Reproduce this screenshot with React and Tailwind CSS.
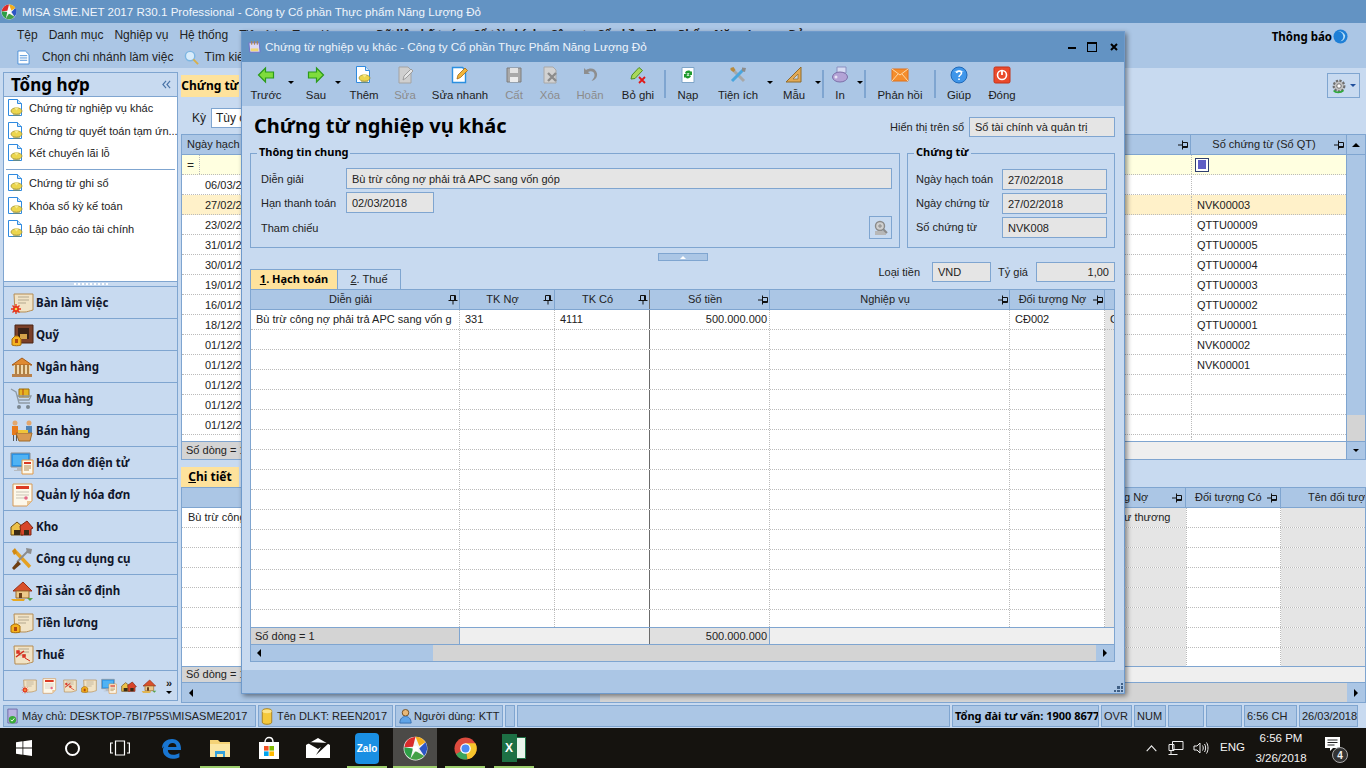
import { Fragment } from 'react'

const FONT = "font-['Liberation_Sans','Noto_Sans',sans-serif]"
const BOLD = "font-['Noto_Sans','Liberation_Sans',sans-serif]"

function Caret({ className = '' }) {
  return <span className={`inline-block w-0 h-0 border-x-[3px] border-x-transparent border-t-[3px] border-t-black ${className}`} />
}

function Pin({ className = '' }) {
  return (
    <svg viewBox="0 0 10 10" className={`w-[10px] h-[10px] shrink-0 ${className}`} fill="none" stroke="#111" strokeWidth="1">
      <path d="M2.5 .5h5v5h-5zM5 5.5v4M.5 5.5h9M6.5 .5v5" />
    </svg>
  )
}

function PinSide({ className = '' }) {
  return (
    <svg viewBox="0 0 10 10" className={`w-[10px] h-[10px] shrink-0 ${className}`} fill="none" stroke="#111" strokeWidth="1">
      <path d="M4.5 2.5h5v5h-5zM4.5 .5v9M0 5h4.5M4.5 6.5h5" />
    </svg>
  )
}

function MisaLogo({ size = 16 }) {
  return (
    <svg viewBox="0 0 20 20" width={size} height={size} className="shrink-0">
      <circle cx="10" cy="10" r="9.5" fill="#f4f4f4" />
      <path d="M10 .5a9.5 9.5 0 0 1 8 4.5l-5 3z" fill="#f2ae1c" />
      <path d="M18 5a9.5 9.5 0 0 1-1 11l-4-6z" fill="#2c55c4" />
      <path d="M17 16a9.5 9.5 0 0 1-11 2l4-6z" fill="#43a047" />
      <path d="M6 18a9.5 9.5 0 0 1-5-9l7 1z" fill="#2e9e46" />
      <path d="M1 9a9.5 9.5 0 0 1 9-8.5l-2 8z" fill="#d92b2b" />
      <circle cx="10" cy="10" r="2.3" fill="#fff" />
    </svg>
  )
}

function DocSun() {
  return (
    <svg viewBox="0 0 18 18" width="18" height="18" className="shrink-0">
      <path d="M1.5 .5h9l4 4v12h-13z" fill="#fff" stroke="#2f8ae0" />
      <path d="M10.5 .5v4h4" fill="#cfe3f7" stroke="#2f8ae0" />
      <ellipse cx="9.5" cy="12" rx="5.5" ry="3.2" fill="#ecd64e" stroke="#97862a" strokeWidth=".7" />
      <path d="M7 8.5l2.500 3 2.500-3" fill="#f5e88a" />
      <path d="M6 16h7" stroke="#8f8a3a" />
    </svg>
  )
}

function ArrowIcon({ left }) {
  return (
    <svg viewBox="0 0 18 18" width="18" height="18">
      <path d={left ? 'M1.5 9l7-7v4h8v6h-8v4z' : 'M16.5 9l-7-7v4h-8v6h8v4z'} fill="#7fdc3c" stroke="#2b9a1a" strokeWidth="1.2" />
    </svg>
  )
}

function GreyEdit() {
  return (
    <svg viewBox="0 0 18 18" width="18" height="18">
      <path d="M3 1h9l3 3v13H3z" fill="#cfcfcf" stroke="#a3a3a3" />
      <path d="M7 14l1-4 7-7 2 2-7 7z" fill="#e6e6e6" stroke="#9c9c9c" />
    </svg>
  )
}

function EditIcon() {
  return (
    <svg viewBox="0 0 18 18" width="18" height="18">
      <path d="M1.5 1.5h10l3 3v12h-13z" fill="#fff" stroke="#2b8fe0" strokeWidth="1.4" />
      <path d="M6 13l1-4 7-7 2.5 2.5-7 7z" fill="#f3b63a" stroke="#a36a10" strokeWidth=".8" />
    </svg>
  )
}

function FloppyIcon() {
  return (
    <svg viewBox="0 0 18 18" width="18" height="18">
      <path d="M2 2h14v14H2z" fill="#a9a9a9" stroke="#7e7e7e" />
      <path d="M5 2h8v5H5z" fill="#e2e2e2" />
      <path d="M5 11h8v5H5z" fill="#ececec" />
    </svg>
  )
}

function DeleteIcon() {
  return (
    <svg viewBox="0 0 18 18" width="18" height="18">
      <path d="M3 1h9l3 3v13H3z" fill="#d2d2d2" stroke="#a8a8a8" />
      <path d="M7 7l8 8M15 7l-8 8" stroke="#8b8b8b" strokeWidth="2.4" />
    </svg>
  )
}

function UndoIcon() {
  return (
    <svg viewBox="0 0 18 18" width="18" height="18">
      <path d="M3 2v6h6L7 6c3-1.5 6-.5 6.500 2.500.3 2.500-1 4-3 6.500 4-1 6-4 5.500-7.500C15 2.500 9.500 1 5 4z" fill="#8e8e8e" />
    </svg>
  )
}

function CancelIcon() {
  return (
    <svg viewBox="0 0 18 18" width="18" height="18">
      <path d="M2 13l1-4 7-7.5 3.500 3L6 12.500z" fill="#a9d85a" stroke="#4f8f20" />
      <path d="M10 11l6 6M16 11l-6 6" stroke="#e01818" strokeWidth="1.8" />
    </svg>
  )
}

function ReloadIcon() {
  return (
    <svg viewBox="0 0 18 18" width="18" height="18">
      <path d="M3 1.5h12v15H3z" fill="#fff" stroke="#7fa5c8" />
      <path d="M6 7c1-3 5-3 6-1l1-1v4H9l1.500-1.500C10 7 8 7 7.500 8zM12 10c-1 3-5 3-6 1l-1 1V8h4l-1.500 1.500c.5.5 2.500.5 3-.5z" fill="#1f9a2e" />
    </svg>
  )
}

function ToolsIcon() {
  return (
    <svg viewBox="0 0 18 18" width="18" height="18" fill="none">
      <path d="M3 3l12 12" stroke="#a8a8a8" strokeWidth="3" />
      <path d="M15 3L3 15" stroke="#4aa6de" strokeWidth="3" />
      <path d="M1.5 2l3-1 2 3-2 2-3-2z" fill="#b88a3c" />
      <path d="M13 1.5l4 .5-1 4-3-1z" fill="#8c8c8c" />
    </svg>
  )
}

function RulerIcon() {
  return (
    <svg viewBox="0 0 18 18" width="18" height="18">
      <path d="M16 1v15H1z" fill="#e2a954" stroke="#8e6a2c" />
      <path d="M13 8v5H8z" fill="#c9d8ea" stroke="#8e6a2c" strokeWidth=".7" />
    </svg>
  )
}

function PrintIcon() {
  return (
    <svg viewBox="0 0 18 18" width="18" height="18">
      <path d="M6 1h9v6H6z" fill="#d7dcf3" stroke="#8a8fc0" />
      <ellipse cx="9" cy="11" rx="7.5" ry="5" fill="#b3a3d6" stroke="#7d6fa8" />
      <circle cx="5" cy="11" r="1.5" fill="#e9e4f6" />
    </svg>
  )
}

function MailIcon() {
  return (
    <svg viewBox="0 0 18 18" width="18" height="18">
      <path d="M1 3h16v12H1z" fill="#f58e2c" stroke="#e0701a" />
      <path d="M1 3l8 6 8-6M1 15l6-7M17 15l-6-7" fill="none" stroke="#ffd9a8" />
    </svg>
  )
}

function HelpIcon() {
  return (
    <svg viewBox="0 0 18 18" width="18" height="18">
      <circle cx="9" cy="9" r="8" fill="#3f96ea" stroke="#1f69b8" />
      <path d="M4 6a6 4 0 0 1 10 0z" fill="#a8d4fa" />
      <path d="M6.5 7C7 4.500 11.500 4.500 11.500 7c0 2-2.500 2-2.500 4" fill="none" stroke="#fff" strokeWidth="1.6" />
      <path d="M8.2 12.5h1.600v1.600H8.200z" fill="#fff" />
    </svg>
  )
}

function PowerIcon() {
  return (
    <svg viewBox="0 0 18 18" width="18" height="18">
      <rect x="1" y="1" width="16" height="16" rx="1.5" fill="#ea4a2c" stroke="#c43218" />
      <circle cx="9" cy="9" r="4.5" fill="none" stroke="#fff" strokeWidth="1.6" />
      <path d="M9 5v4" stroke="#fff" strokeWidth="1.8" />
    </svg>
  )
}

function Paper({ children }) {
  return (
    <svg viewBox="0 0 24 24" width="24" height="24" className="shrink-0">
      <path d="M4 3h19v16c-4 1-6 2-8 2H5z" fill="#f1e3c6" stroke="#b58c52" />
      <path d="M8 6h11M8 9h11M8 12h8" stroke="#b3a78e" />
      {children}
    </svg>
  )
}

const navIcons = {
  desk: (
    <Paper>
      <circle cx="6" cy="18" r="3" fill="#e8341c" />
      <path d="M6 13v10M1 18h10M2.5 14.5l7 7M9.5 14.5l-7 7" stroke="#e8341c" strokeWidth="1.3" />
      <circle cx="6" cy="18" r="1.3" fill="#f5d94c" />
    </Paper>
  ),
  safe: (
    <svg viewBox="0 0 24 24" width="24" height="24">
      <path d="M5 2h18v18H5z" fill="#7a3f28" stroke="#4a2414" />
      <path d="M8 5h11v11H8z" fill="#3b2217" />
      <path d="M10 11h7v5h-7z" fill="#d5a24a" />
      <path d="M2 16l3-3h3l3 3v6c-3 1-6 1-9 0z" fill="#f5b21e" stroke="#a86d08" />
      <path d="M5 16h3v4H5z" fill="#b04a10" />
    </svg>
  ),
  bank: (
    <svg viewBox="0 0 24 24" width="24" height="24">
      <path d="M12 3L2 10h20z" fill="#e08a32" stroke="#a65c18" />
      <path d="M4 10h16v9H4z" fill="#f2d9ad" />
      <path d="M6 10v9M10 10v9M14 10v9M18 10v9" stroke="#9b6a2c" strokeWidth="1.6" />
      <path d="M2 19h20v3H2z" fill="#b9814a" />
    </svg>
  ),
  cart: (
    <svg viewBox="0 0 24 24" width="24" height="24" fill="none">
      <path d="M9 2h10v8H9z" fill="#e6b422" stroke="#9b6e0c" />
      <path d="M13 2v8" stroke="#b5400e" />
      <path d="M1 2l5 3 3 11h11M7 9h14l-2 4H8" stroke="#8e9aa4" strokeWidth="1.3" />
      <circle cx="9" cy="20" r="2" fill="#7b8791" />
      <circle cx="18" cy="20" r="2" fill="#7b8791" />
    </svg>
  ),
  sale: (
    <svg viewBox="0 0 24 24" width="24" height="24">
      <circle cx="5" cy="4" r="2.5" fill="#e3a86e" />
      <path d="M2 7h6v9H2z" fill="#e87b1c" />
      <path d="M3 16h1v6H3zM6 16h1v6H6z" fill="#555" />
      <circle cx="19" cy="4" r="2.5" fill="#e3a86e" />
      <path d="M16 7h6v7h-6z" fill="#4f84b8" />
      <path d="M6 14h16l-2 8H9z" fill="#d99a52" stroke="#a06a28" />
      <path d="M8 11h10v3H8z" fill="#f0c43a" />
    </svg>
  ),
  einvoice: (
    <svg viewBox="0 0 24 24" width="24" height="24">
      <path d="M1 2h19v14H1z" fill="#2a94e8" stroke="#8b8f94" />
      <path d="M3 4h15v10H3z" fill="#4fb3f4" />
      <path d="M7 16h6v3H7zM4 19h11v1H4z" fill="#b5bac0" />
      <path d="M12 9h11v14H12z" fill="#fdf8ea" stroke="#e09a48" />
      <path d="M14 11h7v2h-7z" fill="#d83a24" />
      <path d="M14 15h7M14 17h7M14 19h5" stroke="#b58c52" />
    </svg>
  ),
  invoice: (
    <svg viewBox="0 0 24 24" width="24" height="24">
      <path d="M3 1h19v17l-5 5H3z" fill="#fdf8ea" stroke="#d69a58" />
      <path d="M6 3h13v3H6z" fill="#dc3a24" />
      <path d="M6 9h13M6 12h13M6 15h9" stroke="#c9c3b5" />
      <path d="M17 23v-5h5z" fill="#e8c595" />
      <circle cx="16" cy="15" r="1.8" fill="#e56a8a" />
    </svg>
  ),
  store: (
    <svg viewBox="0 0 24 24" width="24" height="24">
      <path d="M1 12l6-5 6 5v8H1z" fill="#ecc14a" stroke="#6f4c10" />
      <path d="M10 11l7-5 6 7-2 1v6H11z" fill="#d8452a" stroke="#7e2410" />
      <path d="M4 15h6v5H4zM14 15h5v5h-5z" fill="#3a2a15" />
    </svg>
  ),
  tool: (
    <svg viewBox="0 0 24 24" width="24" height="24" fill="none">
      <path d="M4 3l16 17" stroke="#e5a122" strokeWidth="3.4" />
      <path d="M2 4l3-3 2 5-3 2z" fill="#d28a14" />
      <path d="M19 3L7 15" stroke="#8d8d8d" strokeWidth="2" />
      <path d="M8 14l-6 7 2 2 7-6z" fill="#6f3f12" />
      <path d="M16 1l6 1-1 5-4-1z" fill="#8d8d8d" />
    </svg>
  ),
  asset: (
    <svg viewBox="0 0 24 24" width="24" height="24">
      <path d="M3 12L13 3l9 9z" fill="#d9502a" stroke="#97301a" />
      <path d="M6 12h13v7H6z" fill="#ecc98a" stroke="#9b6a2c" />
      <path d="M9 14h3v5H9z" fill="#6b3f18" />
      <path d="M1 20h14l-1 2H3z" fill="#e8a820" />
      <path d="M17 19h6l-3 3z" fill="#55a24a" />
    </svg>
  ),
  salary: (
    <Paper>
      <path d="M1 15l3-2h3l3 2v6c-3 1-6 1-9 0z" fill="#f5b21e" stroke="#a86d08" />
      <path d="M4 16h3v4H4z" fill="#b04a10" />
    </Paper>
  ),
  tax: (
    <Paper>
      <path d="M6 14l8-6M7 8h2v2H7zM13 12h2v2h-2z" stroke="#d8281a" strokeWidth="1.4" fill="none" />
      <path d="M15 15l5 3" stroke="#d8281a" />
    </Paper>
  ),
}

const navItems = [
  ['Bàn làm việc', 'desk'],
  ['Quỹ', 'safe'],
  ['Ngân hàng', 'bank'],
  ['Mua hàng', 'cart'],
  ['Bán hàng', 'sale'],
  ['Hóa đơn điện tử', 'einvoice'],
  ['Quản lý hóa đơn', 'invoice'],
  ['Kho', 'store'],
  ['Công cụ dụng cụ', 'tool'],
  ['Tài sản cố định', 'asset'],
  ['Tiền lương', 'salary'],
  ['Thuế', 'tax'],
]

function Sidebar() {
  return (
    <aside className="w-[175px] ml-[3px] mt-[4px] mb-[3px] shrink-0 flex flex-col border border-[#7fa5d0] bg-[#c8daf0]">
      <div className="h-[24px] shrink-0 flex items-center justify-between pl-[7px] pr-[6px] border-b border-[#7fa5d0]">
        <span className={`text-[17px] font-bold text-black ${BOLD}`}>Tổng hợp</span>
        <svg viewBox="0 0 10 10" className="w-[9px] h-[9px]" fill="none" stroke="#4a74a8" strokeWidth="1.3">
          <path d="M4.5 1L1 5l3.500 4M9 1L5.500 5 9 9" />
        </svg>
      </div>
      <div className="h-[185px] shrink-0 bg-white text-[11px] text-[#222] border-b border-[#7fa5d0]">
        {['Chứng từ nghiệp vụ khác', 'Chứng từ quyết toán tạm ứn...', 'Kết chuyển lãi lỗ'].map(t => (
          <div key={t} className="h-[22.5px] flex items-center gap-[4px] pl-[3px] whitespace-nowrap"><DocSun />{t}</div>
        ))}
        <div className="h-[1px] bg-[#7fa5d0] mx-[2px] mt-[4px] mb-[2px]" />
        {['Chứng từ ghi sổ', 'Khóa sổ kỳ kế toán', 'Lập báo cáo tài chính'].map(t => (
          <div key={t} className="h-[23px] flex items-center gap-[4px] pl-[3px] whitespace-nowrap"><DocSun />{t}</div>
        ))}
      </div>
      <div className="h-[5px] shrink-0 flex items-center justify-center border-b border-[#7fa5d0]">
        <span className="w-[34px] h-[2px] border-t-2 border-dotted border-white" />
      </div>
      {navItems.map(([label, icon]) => (
        <div key={label} className="h-[32px] shrink-0 flex items-center gap-[2px] pl-[5px] border-b border-[#7fa5d0]">
          <span className="w-[25px] flex justify-center">{navIcons[icon]}</span>
          <span className={`text-[11.5px] font-bold text-[#10162a] whitespace-nowrap ${BOLD}`}>{label}</span>
        </div>
      ))}
      <div className="flex-1 flex items-center pl-[17px] gap-[4px]">
        {['desk', 'invoice', 'tax', 'salary', 'einvoice', 'store', 'asset'].map(k => (
          <span key={k} className="w-[16px] h-[16px] overflow-hidden [&>svg]:w-[16px] [&>svg]:h-[16px]">{navIcons[k]}</span>
        ))}
        <span className="ml-[5px] flex flex-col items-center leading-none text-[11px] font-bold">
          »<Caret className="mt-[2px]" />
        </span>
      </div>
    </aside>
  )
}

const topRows = ['06/03/2018', '27/02/2018', '23/02/2018', '31/01/2018', '30/01/2018', '19/01/2018', '16/01/2018', '18/12/2017', '01/12/2017', '01/12/2017', '01/12/2017', '01/12/2017', '01/12/2017', '01/12/2017']
const topCodes = ['', 'NVK00003', 'QTTU00009', 'QTTU00005', 'QTTU00004', 'QTTU00003', 'QTTU00002', 'QTTU00001', 'NVK00002', 'NVK00001', '', '', '', '']

function ListGrid() {
  return (
    <div className="h-[326px] shrink-0 flex flex-col border border-[#7fa5d0] text-[11px] text-[#222]">
      <div className="h-[20px] shrink-0 flex bg-[#abc6e5] border-b border-[#7fa5d0]">
        <div className="flex-1 flex items-center pl-[5px] whitespace-nowrap">Ngày hạch toán</div>
        <div className="w-[67px] shrink-0 flex items-center justify-end pr-[2px] border-r border-[#7fa5d0]"><PinSide /></div>
        <div className="w-[155px] shrink-0 flex items-center justify-center relative pr-[9px]">
          Số chứng từ (Sổ QT)
          <PinSide className="absolute right-[2px]" />
        </div>
        <div className="w-[19px] shrink-0 border-l border-[#7fa5d0] flex items-center justify-center">
          <span className="w-0 h-0 border-x-[4px] border-x-transparent border-b-[4px] border-b-black" />
        </div>
      </div>
      <div className="flex-1 flex min-h-0">
        <div className="flex-1 min-w-0 flex flex-col overflow-hidden">
          <div className="h-[20px] shrink-0 flex bg-[#ffffe0] border-b border-dotted border-[#bbb]">
            <div className="w-[18px] shrink-0 flex items-center justify-center border-r border-dotted border-[#bbb] text-[12px]">=</div>
            <div className="flex-1" />
            <div className="w-[155px] shrink-0 border-l border-dotted border-[#bbb] flex items-center pl-[3px]">
              <span className="w-[14px] h-[14px] border border-[#2f3f6e] flex items-center justify-center bg-white">
                <span className="w-[8px] h-[9px] bg-[#5e5ec4]" />
              </span>
            </div>
          </div>
          {topRows.map((d, i) => (
            <div key={i} className={`h-[20px] shrink-0 flex pt-[1px] border-b border-dotted border-[#bbb] ${i === 1 ? 'bg-[#fff1c9]' : 'bg-white'}`}>
              <div className="flex-1 flex items-center pl-[23px]">{d}</div>
              <div className="w-[155px] shrink-0 border-l border-dotted border-[#bbb] flex items-center pl-[5px]">{topCodes[i]}</div>
            </div>
          ))}
        </div>
        <div className="w-[19px] shrink-0 flex flex-col border-l border-[#7fa5d0] bg-[#d4d4d4]">
          <div className="h-[260px] bg-[#abc6e5]" />
        </div>
      </div>
      <div className="h-[18px] shrink-0 flex bg-[#efefef] border-t border-[#7fa5d0]">
        <div className="w-[60px] flex items-center pl-[4px] bg-[#d4d4d4] whitespace-nowrap overflow-hidden">Số dòng = 14</div>
        <div className="flex-1" />
        <div className="w-[19px] shrink-0 bg-[#abc6e5] border-l border-[#7fa5d0] flex items-center justify-center"><Caret /></div>
      </div>
    </div>
  )
}

function DetailGrid() {
  return (
    <div className="flex-1 min-h-0 flex flex-col">
      <div className="h-[20px] shrink-0 flex">
        <div className={`w-[58px] h-full bg-[#fee29c] flex items-center justify-center text-[12px] font-bold text-black ${BOLD}`}><span><u>C</u>hi tiết</span></div>
      </div>
      <div className="flex-1 min-h-0 flex flex-col border border-[#7fa5d0] text-[11px] text-[#222]">
        <div className="h-[20px] shrink-0 flex bg-[#abc6e5] border-b border-[#7fa5d0]">
          <div className="flex-1" />
          <div className="w-[62px] shrink-0 flex items-center justify-between whitespace-nowrap border-r border-[#7fa5d0] pr-[3px]"><span>g Nợ</span><PinSide /></div>
          <div className="w-[95px] shrink-0 flex items-center justify-between whitespace-nowrap border-r border-[#7fa5d0] px-[9px] pr-[3px]"><span>Đối tượng Có</span><PinSide /></div>
          <div className="w-[84px] shrink-0 flex items-center whitespace-nowrap overflow-hidden pl-[27px]">Tên đối tượng</div>
        </div>
        <div className="flex-1 min-h-0 overflow-hidden">
          {Array.from({ length: 8 }).map((_, i) => (
            <div key={i} className="h-[20px] flex border-b border-dotted border-[#bbb] bg-white">
              <div className="flex-1 flex items-center pl-[6px] whitespace-nowrap">{i === 0 ? 'Bù trừ công nợ' : ''}</div>
              <div className="w-[62px] shrink-0 bg-[#e5e5e5] flex items-center whitespace-nowrap">{i === 0 ? 'ư thương' : ''}</div>
              <div className="w-[95px] shrink-0 border-x border-dotted border-[#bbb]" />
              <div className="w-[84px] shrink-0 bg-[#e5e5e5]" />
            </div>
          ))}
        </div>
        <div className="h-[17px] shrink-0 flex bg-[#efefef] border-y border-[#7fa5d0]">
          <div className="w-[60px] bg-[#d4d4d4] flex items-center pl-[4px] whitespace-nowrap overflow-hidden">Số dòng = 1</div>
        </div>
        <div className="h-[19px] shrink-0 flex bg-[#d4d4d4]">
          <div className="w-[18px] bg-[#abc6e5] flex items-center justify-center"><span className="w-0 h-0 border-y-[4px] border-y-transparent border-r-[4px] border-r-black" /></div>
          <div className="w-[400px] bg-[#abc6e5]" />
          <div className="flex-1" />
          <div className="w-[18px] bg-[#abc6e5] flex items-center justify-center"><span className="w-0 h-0 border-y-[4px] border-y-transparent border-l-[4px] border-l-black" /></div>
        </div>
      </div>
    </div>
  )
}

function MainPane() {
  return (
    <main className="flex-1 min-w-0 ml-[3px] flex flex-col mb-[1px]">
      <div className="h-[26px] mt-[7px] shrink-0 flex items-start justify-between">
        <div className={`w-[58px] h-[22px] bg-[#fee29c] flex items-center justify-center text-[12px] font-bold whitespace-nowrap overflow-hidden text-black ${BOLD}`}>Chứng từ</div>
        <div className="w-[33px] h-[25px] mr-[6px] mt-[-2px] border border-[#7fa5d0] flex items-center justify-center gap-[3px]">
          <svg viewBox="0 0 18 18" width="16" height="16">
            <circle cx="9" cy="9" r="6" fill="#c3c3c3" stroke="#6e6e6e" strokeWidth="2.4" strokeDasharray="2.5 1.5" />
            <circle cx="9" cy="9" r="2.5" fill="#fff" stroke="#666" />
            <path d="M3 14c2 3 8 3 11 0" fill="none" stroke="#31a83c" strokeWidth="2" />
          </svg>
          <span className="w-0 h-0 border-x-[3px] border-x-transparent border-t-[3px] border-t-[#1f4f9c]" />
        </div>
      </div>
      <div className="h-[33px] shrink-0 flex items-center gap-[5px] pl-[11px] text-[12px]">
        <span>Kỳ</span>
        <span className="h-[20px] w-[60px] bg-white border border-[#7fa5d0] pl-[4px] flex items-center whitespace-nowrap">Tùy chọn</span>
      </div>
      <ListGrid />
      <div className="h-[7px] shrink-0" />
      <DetailGrid />
    </main>
  )
}

const toolItems = [
  { label: 'Trước', icon: <ArrowIcon left />, w: 'w-[36px]', caret: 'w-[14px]' },
  { label: 'Sau', icon: <ArrowIcon />, w: 'w-[36px]', caret: 'w-[8px]' },
  { label: 'Thêm', icon: <DocSun />, w: 'w-[44px]' },
  { label: 'Sửa', icon: <GreyEdit />, w: 'w-[38px]', off: true },
  { label: 'Sửa nhanh', icon: <EditIcon />, w: 'w-[72px]' },
  { label: 'Cất', icon: <FloppyIcon />, w: 'w-[36px]', off: true },
  { label: 'Xóa', icon: <DeleteIcon />, w: 'w-[36px]', off: true },
  { label: 'Hoãn', icon: <UndoIcon />, w: 'w-[44px]', off: true },
  { label: 'Bỏ ghi', icon: <CancelIcon />, w: 'w-[52px]', sep: true },
  { label: 'Nạp', icon: <ReloadIcon />, w: 'w-[44px]' },
  { label: 'Tiện ích', icon: <ToolsIcon />, w: 'w-[56px]', caret: 'w-[8px]' },
  { label: 'Mẫu', icon: <RulerIcon />, w: 'w-[40px]', caret: 'w-[8px]', sep: true },
  { label: 'In', icon: <PrintIcon />, w: 'w-[32px]', caret: 'w-[8px]', sep: true },
  { label: 'Phản hồi', icon: <MailIcon />, w: 'w-[68px]', sep: true },
  { label: 'Giúp', icon: <HelpIcon />, w: 'w-[46px]' },
  { label: 'Đóng', icon: <PowerIcon />, w: 'w-[40px]' },
]

function Field({ className = '', children, right }) {
  return (
    <div className={`bg-[#e5e5e5] border border-[#7fa5d0] flex items-center px-[5px] pt-[1px] whitespace-nowrap overflow-hidden ${right ? 'justify-end' : ''} ${className}`}>
      {children}
    </div>
  )
}

function Group({ title, className = '', children }) {
  return (
    <div className={`relative border border-[#7fa5d0] ${className}`}>
      <span className={`absolute -top-[10px] left-[6px] bg-[#c8daf0] px-[2px] text-[11px] font-bold text-black whitespace-nowrap ${BOLD}`}>{title}</span>
      {children}
    </div>
  )
}

const gridCols = [
  { w: 'w-[209px]', title: 'Diễn giải', pin: <Pin /> },
  { w: 'w-[95px]', title: 'TK Nợ', pin: <Pin /> },
  { w: 'w-[95px]', title: 'TK Có', pin: <Pin />, thick: true },
  { w: 'w-[120px]', title: 'Số tiền', pin: <PinSide /> },
  { w: 'w-[240px]', title: 'Nghiệp vụ', pin: <PinSide /> },
  { w: 'w-[95px]', title: 'Đối tượng Nợ', pin: <PinSide /> },
]

const firstRow = ['Bù trừ công nợ phải trả APC sang vốn g', '331', '4111', '500.000.000', '', 'CĐ002']

function Dialog() {
  return (
    <section className="absolute left-[241px] top-[31px] w-[884px] h-[663px] flex flex-col border border-[#6f9acb] bg-[#c8daf0] shadow-[2px_2px_5px_rgba(0,0,0,.45)] text-[11px] text-[#222]">
      <header className="h-[30px] shrink-0 bg-[#6393c3] flex items-center pl-[5px] pr-[6px] text-[11.7px] text-[#eef4fb]">
        <svg viewBox="0 0 16 16" width="15" height="15" className="mr-[3px]">
          <path d="M2 3h11l1 10H3z" fill="#dcd9f5" stroke="#6e6fc8" />
          <path d="M5 1v4M8 1v4M11 1v4" stroke="#a85" strokeWidth="1.2" />
          <path d="M4 9h8v3H4z" fill="#f0d774" />
        </svg>
        <span className="flex-1 whitespace-nowrap">Chứng từ nghiệp vụ khác - Công ty Cổ phần Thực Phẩm Năng Lượng Đỏ</span>
        <span className="w-[8px] h-[2px] bg-black mr-[11px] mt-[1px]" />
        <span className="w-[10px] h-[10px] border border-black border-t-2 mr-[13px]" />
        <svg viewBox="0 0 8 8" className="w-[8px] h-[8px]" stroke="#000" strokeWidth="2"><path d="M1 1l6 6M7 1L1 7" /></svg>
      </header>
      <div className="h-[44px] shrink-0 bg-[#abc6e5] flex pl-[6px] text-[11.4px]">
        {toolItems.map(item => (
          <Fragment key={item.label}>
            <div className={`${item.w} shrink-0 flex flex-col items-center pt-[4px] whitespace-nowrap ${item.off ? 'text-[#8b8b8b]' : 'text-[#1c1c1c]'}`}>
              <span className="h-[18px]">{item.icon}</span>
              <span className="mt-[4px] leading-[14px]">{item.label}</span>
            </div>
            {item.caret && <div className={`${item.caret} shrink-0 flex items-start pt-[19px] justify-center`}><Caret /></div>}
            {item.sep && <div className="w-[2px] shrink-0 bg-[#7fa5d0] my-[8px]" />}
          </Fragment>
        ))}
      </div>
      <div className="flex-1 min-h-0 flex flex-col px-[9px]">
        <div className="h-[47px] shrink-0 flex items-center justify-between pl-[3px] pb-[7px]">
          <h1 className={`text-[20px] font-bold text-black whitespace-nowrap ${BOLD}`}>Chứng từ nghiệp vụ khác</h1>
          <div className="flex items-center gap-[5px] pt-[2px]">
            <span>Hiển thị trên sổ</span>
            <Field className="w-[146px] h-[20px]">Sổ tài chính và quản trị</Field>
          </div>
        </div>
        <div className="h-[95px] shrink-0 flex gap-[7px] -ml-[1px]">
          <Group title="Thông tin chung" className="w-[650px] flex flex-col pl-[10px] pr-[7px] pt-[14px] gap-[3px]">
            <div className="flex items-center h-[21px]">
              <span className="w-[85px] pt-[1px]">Diễn giải</span>
              <Field className="flex-1 h-full">Bù trừ công nợ phải trả APC sang vốn góp</Field>
            </div>
            <div className="flex items-center h-[21px]">
              <span className="w-[85px] pt-[1px]">Hạn thanh toán</span>
              <Field className="w-[88px] h-full">02/03/2018</Field>
            </div>
            <div className="flex items-center h-[23px]">
              <span className="flex-1 pt-[1px]">Tham chiếu</span>
              <span className="w-[23px] h-[23px] border border-[#7fa5d0] flex items-center justify-center bg-[#c8daf0]">
                <svg viewBox="0 0 16 16" width="16" height="16">
                  <circle cx="7" cy="6" r="4.5" fill="#cfcfcf" stroke="#8a8a8a" strokeWidth="1.4" />
                  <path d="M5 6h4M7 4v4" stroke="#8a8a8a" />
                  <path d="M2 11h11v4H2z" fill="#b7b7b7" />
                  <path d="M10 9l4 4" stroke="#8a8a8a" strokeWidth="2" />
                </svg>
              </span>
            </div>
          </Group>
          <Group title="Chứng từ" className="flex-1 flex flex-col pl-[8px] pr-[7px] pt-[15px] gap-[3px]">
            {[['Ngày hạch toán', '27/02/2018'], ['Ngày chứng từ', '27/02/2018'], ['Số chứng từ', 'NVK008']].map(([l, v]) => (
              <div key={l} className="flex items-center h-[21px]">
                <span className="w-[86px] whitespace-nowrap">{l}</span>
                <Field className="flex-1 h-full">{v}</Field>
              </div>
            ))}
          </Group>
        </div>
        <div className="h-[8px] w-[50px] shrink-0 mt-[5px] ml-[407px] bg-[#abc6e5] border border-[#7fa5d0] flex items-center justify-center">
          <span className="w-0 h-0 border-x-[3px] border-x-transparent border-b-[3px] border-b-white" />
        </div>
        <div className="h-[28px] shrink-0 flex items-end justify-between -ml-[1px]">
          <div className="flex h-[20px]">
            <div className={`w-[88px] bg-[#fee29c] border-x border-t border-[#7fa5d0] flex items-center justify-center font-bold text-[11px] text-black whitespace-nowrap ${BOLD}`}><span><u>1</u>. Hạch toán</span></div>
            <div className="w-[63px] border-r border-t border-[#7fa5d0] flex items-center justify-center"><span><u>2</u>. Thuế</span></div>
          </div>
          <div className="flex items-center self-start pt-[1px] h-[21px]">
            <span>Loại tiền</span>
            <Field className="w-[59px] h-[20px] ml-[12px]">VND</Field>
            <span className="ml-[7px]">Tỷ giá</span>
            <Field className="w-[79px] h-[20px] ml-[8px]" right>1,00</Field>
          </div>
        </div>
        <div className="h-[373px] shrink-0 flex flex-col border border-[#7fa5d0] -ml-[1px] bg-white">
          <div className="h-[20px] shrink-0 flex bg-[#abc6e5] border-b border-[#7fa5d0]">
            {gridCols.map(c => (
              <div key={c.title} className={`${c.w} shrink-0 flex items-center justify-center relative pr-[9px] border-r ${c.thick ? 'border-[#6b6b6b]' : 'border-[#7fa5d0]'} whitespace-nowrap`}>
                {c.title}
                <span className="absolute right-[1px] flex">{c.pin}</span>
              </div>
            ))}
            <div className="flex-1" />
          </div>
          <div className="flex-1 min-h-0 flex">
            <div className="w-[854px] shrink-0 overflow-hidden">
              {Array.from({ length: 16 }).map((_, r) => (
                <div key={r} className="h-[20px] flex border-b border-dotted border-[#bbb]">
                  {gridCols.map((c, i) => (
                    <div key={i} className={`${c.w} shrink-0 flex items-center px-[5px] whitespace-nowrap overflow-hidden ${i === 3 ? 'justify-end !pr-[2px]' : ''} ${c.thick ? 'border-r border-[#6b6b6b]' : 'border-r border-dotted border-[#bbb]'}`}>
                      {r === 0 ? firstRow[i] : ''}
                    </div>
                  ))}
                </div>
              ))}
            </div>
            <div className="flex-1 min-w-0 overflow-hidden bg-[#e5e5e5]">
              <div className="h-[20px] bg-[#e5e5e5] pl-[5px] flex items-center border-b border-dotted border-[#bbb]">C</div>
            </div>
          </div>
          <div className="h-[18px] shrink-0 flex bg-[#efefef] border-y border-[#7fa5d0]">
            <div className="w-[209px] bg-[#d4d4d4] flex items-center pl-[4px] border-r border-[#7fa5d0]">Số dòng = 1</div>
            <div className="w-[190px] border-r border-[#6b6b6b]" />
            <div className="w-[120px] flex items-center justify-end px-[2px] bg-[#e0e0e0] border-r border-[#7fa5d0]">500.000.000</div>
          </div>
          <div className="h-[16px] shrink-0 flex bg-[#d4d4d4]">
            <div className="w-[182px] bg-[#abc6e5] flex items-center pl-[6px]"><span className="w-0 h-0 border-y-[4px] border-y-transparent border-r-[4px] border-r-black" /></div>
            <div className="flex-1" />
            <div className="w-[18px] bg-[#abc6e5] flex items-center justify-center"><span className="w-0 h-0 border-y-[4px] border-y-transparent border-l-[4px] border-l-black" /></div>
          </div>
        </div>
      </div>
      <div className="h-[23px] shrink-0 bg-[#abc6e5] flex justify-end items-end">
        <span className="w-[9px] h-[9px] m-[1px] grid grid-cols-3 gap-[1px]">
          {[0, 1, 2, 3, 4, 5, 6, 7, 8].map(i => (
            <span key={i} className={[2, 4, 5, 6, 7, 8].includes(i) ? 'bg-[#3f5f85]' : ''} />
          ))}
        </span>
      </div>
    </section>
  )
}

function StatusCell({ className = '', children }) {
  return <div className={`h-full shrink-0 bg-[#abc6e5] border border-[#7fa5d0] flex items-center whitespace-nowrap overflow-hidden px-[2px] ${className}`}>{children}</div>
}

function StatusBar() {
  return (
    <div className="h-[24px] shrink-0 bg-[#c8daf0] flex gap-[2px] pl-[3px] pr-[4px] py-[1px] text-[11px] text-[#222]">
      <StatusCell className="w-[253px] gap-[3px]">
        <svg viewBox="0 0 14 18" width="13" height="17" className="shrink-0">
          <path d="M2 1h10v15H2z" fill="#b9b3e0" stroke="#6e69a8" />
          <circle cx="7" cy="12.5" r="4" fill="#3bab3b" />
          <path d="M5 12.5l1.500 1.500 2.500-3" stroke="#fff" fill="none" />
        </svg>
        Máy chủ: DESKTOP-7BI7P5S\MISASME2017
      </StatusCell>
      <StatusCell className="w-[135px] gap-[4px]">
        <svg viewBox="0 0 12 18" width="12" height="17" className="shrink-0">
          <path d="M1 3c0-3 10-3 10 0v12c0 3-10 3-10 0z" fill="#f5c93c" stroke="#a8801c" />
          <ellipse cx="6" cy="3.5" rx="5" ry="2" fill="#fde48a" />
        </svg>
        Tên DLKT: REEN2017
      </StatusCell>
      <StatusCell className="w-[108px] gap-[1px]">
        <svg viewBox="0 0 16 18" width="15" height="17" className="shrink-0">
          <circle cx="8" cy="5" r="3.5" fill="#e8b878" stroke="#704d20" />
          <path d="M2 16c0-5 3-7 6-7s6 2 6 7z" fill="#5fa4e8" stroke="#3670b0" />
        </svg>
        Người dùng: KTT
      </StatusCell>
      <StatusCell className="w-[10px]" />
      <StatusCell className="w-[433px]" />
      <StatusCell className={`w-[147px] font-bold text-[11px] text-black ${BOLD}`}>Tổng đài tư vấn: 1900 8677</StatusCell>
      <StatusCell className="w-[31px]">OVR</StatusCell>
      <StatusCell className="w-[32px]">NUM</StatusCell>
      <StatusCell className="w-[36px]" />
      <StatusCell className="w-[36px]" />
      <StatusCell className="w-[53px]">6:56 CH</StatusCell>
      <StatusCell className="w-[59px]">26/03/2018</StatusCell>
    </div>
  )
}

function TaskSlot({ w, active, running, children }) {
  return (
    <div className={`${w} h-full shrink-0 relative flex items-center justify-center ${active ? 'bg-[#4b4a47]' : ''}`}>
      {children}
      {running && <span className={`absolute bottom-0 left-1/2 -translate-x-1/2 h-[2px] bg-[#9ccd6b] ${active ? 'w-full' : 'w-[40px]'}`} />}
    </div>
  )
}

function Taskbar() {
  return (
    <footer className="h-[40px] shrink-0 bg-[#15130f] flex items-stretch text-[#f2f2f2]">
      <TaskSlot w="w-[48px]">
        <svg viewBox="0 0 16 16" width="16" height="16" fill="#fff"><path d="M0 2.200L6.500 1.300v6.300H0zM7.300 1.200L16 0v7.600H7.300zM0 8.400h6.500v6.300L0 13.800zM7.300 8.400H16V16l-8.700-1.200z" /></svg>
      </TaskSlot>
      <TaskSlot w="w-[48px]">
        <span className="w-[15px] h-[15px] rounded-full border-2 border-white" />
      </TaskSlot>
      <TaskSlot w="w-[48px]">
        <svg viewBox="0 0 20 16" width="20" height="16" fill="none" stroke="#fff" strokeWidth="1.2">
          <path d="M5.500 1h9v14h-9zM3 3H.6v10H3M17 3h2.400v10H17" />
        </svg>
      </TaskSlot>
      <TaskSlot w="w-[54px]">
        <svg viewBox="0 0 20 20" width="21" height="21">
          <path d="M1 10C1 3.500 6 1 10.500 1 16 1 19.500 5 19 11.500H6.500c0 3 2 4.500 5 4.500 2.500 0 4.500-.7 6-1.700v4c-2 1-4 1.500-6.500 1.500C5 19.300 1 15.500 2 10c.8-3 3-5 5.500-6C5 5.500 3 7.500 1 10zM6.700 8.500h8c0-2.500-1.500-3.700-3.700-3.700-2.200 0-3.800 1.500-4.300 3.700z" fill="#1976d2" />
        </svg>
      </TaskSlot>
      <TaskSlot w="w-[44px]" running>
        <svg viewBox="0 0 22 22" width="22" height="22">
          <path d="M1 3h8l2 2h10v15H1z" fill="#f4d276" />
          <path d="M1 7h20v13H1z" fill="#fbe6a3" />
          <path d="M6 14h10v6H6z" fill="#36a2dc" />
          <path d="M8 17h6v3H8z" fill="#fbe6a3" />
        </svg>
      </TaskSlot>
      <TaskSlot w="w-[53px]">
        <svg viewBox="0 0 22 24" width="22" height="24">
          <path d="M7 6c0-6 8-6 8 0" fill="none" stroke="#fff" strokeWidth="1.4" />
          <path d="M1 6h20v17H1z" fill="#fff" />
          <path d="M6 10h4.600v4.600H6z" fill="#f25022" />
          <path d="M11.400 10H16v4.600h-4.600z" fill="#7fba00" />
          <path d="M6 15.400h4.600V20H6z" fill="#00a4ef" />
          <path d="M11.400 15.400H16V20h-4.600z" fill="#ffb900" />
        </svg>
      </TaskSlot>
      <TaskSlot w="w-[46px]">
        <svg viewBox="0 0 24 20" width="24" height="20">
          <path d="M0 7L12 0l12 7v13H0z" fill="#fff" />
          <path d="M0 7l12 7 3-2-5 8 13-12z" fill="#15130f" transform="translate(0 -3)" />
        </svg>
      </TaskSlot>
      <TaskSlot w="w-[52px]" running>
        <div className="w-[24px] h-[31px] rounded-[4px] bg-[#1a8fe3] flex items-center justify-center text-white text-[10px] font-bold">Zalo</div>
      </TaskSlot>
      <TaskSlot w="w-[44px]" active running>
        <MisaLogo size={25} />
      </TaskSlot>
      <div className="w-[3px] shrink-0" />
      <TaskSlot w="w-[50px]" running>
        <svg viewBox="0 0 24 24" width="23" height="23">
          <circle cx="12" cy="12" r="11.5" fill="#dd4b3e" />
          <path d="M12 12L2 18a11.500 11.500 0 0 0 12 5.300z" fill="#3ba55c" />
          <path d="M12 6.500h10.400A11.500 11.500 0 0 1 14 23.300z" fill="#f7c52b" />
          <circle cx="12" cy="12" r="5.5" fill="#fff" />
          <circle cx="12" cy="12" r="4.2" fill="#4b8bf4" />
        </svg>
      </TaskSlot>
      <TaskSlot w="w-[47px]" running>
        <div className="w-[24px] h-[28px] relative flex items-center">
          <span className="absolute right-0 top-[3px] bottom-[3px] w-[16px] bg-[#e9f5ec] border border-[#1d7044]" />
          <span className="relative w-[15px] h-full bg-[#1d7044] flex items-center justify-center text-white text-[12px] font-bold">X</span>
        </div>
      </TaskSlot>
      <div className="flex-1" />
      <div className="flex items-center gap-[6px] text-[11.5px] pr-[14px]">
        <svg viewBox="0 0 12 8" width="11" height="7" fill="none" stroke="#eee" strokeWidth="1.2"><path d="M.5 7L6 1l5.500 6" /></svg>
        <svg viewBox="0 0 16 16" width="16" height="16" fill="none" stroke="#eee" className="ml-[5px]"><path d="M4.500 1.500H15v8H4.500zM1 4.500h5v6H1zM3 10.500v4M.5 14.500h9" /></svg>
        <svg viewBox="0 0 16 14" width="16" height="14" fill="none" stroke="#eee" className="ml-[3px]"><path d="M1 5h3l3-3v10L4 9H1zM9.500 4.500c1 1.500 1 3.500 0 5M11.500 3c1.500 2 1.500 6 0 8M13.500 1.500c2 3 2 8 0 11" /></svg>
        <span className="ml-[5px] w-[22px] whitespace-nowrap">ENG</span>
        <span className="ml-[3px] w-[60px] text-center leading-[20px]">
          6:56 PM<br />3/26/2018
        </span>
      </div>
      <div className="w-[34px] mr-[7px] shrink-0 relative flex items-center">
        <svg viewBox="0 0 16 14" width="16" height="14" className="-mt-[8px]"><path d="M0 0h15v11H8l-3 3v-3H0z" fill="#fff" /><path d="M2.500 3h10M2.500 5.500h10M2.500 8h7" stroke="#222" /></svg>
        <span className="absolute left-[7px] top-[19px] w-[16px] h-[16px] rounded-full bg-[#333] border border-[#aaa] flex items-center justify-center text-[10px] font-bold">4</span>
      </div>
    </footer>
  )
}

export default function App() {
  return (
    <div className={`relative w-[1366px] h-[768px] overflow-hidden bg-[#c8daf0] flex flex-col text-[#222] ${FONT}`}>
      <div className="h-[23px] shrink-0 bg-[#6393c3] flex items-center pl-[1px] gap-[5px] text-[11.6px] text-[#f0f5fb] whitespace-nowrap">
        <MisaLogo />
        MISA SME.NET 2017 R30.1 Professional - Công ty Cổ phần Thực phẩm Năng Lượng Đỏ
      </div>
      <div className="h-[45px] shrink-0 bg-[#abc6e5] flex flex-col text-[12px] relative">
        <div className="h-[23px] flex items-center gap-[11px] pl-[17px] whitespace-nowrap">
          <span>Tệp</span><span>Danh mục</span><span>Nghiệp vụ</span><span>Hệ thống</span><span>Tiện ích</span><span>Trợ giúp</span>
          <span className={`ml-[28px] font-bold text-[11.5px] ${BOLD}`}>Dữ liệu kế toán - Sổ tài chính - Công ty Cổ phần Thực Phẩm Năng Lượng Đỏ</span>
        </div>
        <div className="h-[22px] flex items-center pl-[17px] whitespace-nowrap">
          <svg viewBox="0 0 14 16" width="13" height="15" className="mr-[12px]">
            <path d="M1 1h8l4 4v10H1z" fill="#fff" stroke="#4a8fd8" />
            <path d="M3 6h8M3 8.500h8M3 11h8" stroke="#4a8fd8" />
          </svg>
          Chọn chi nhánh làm việc
          <svg viewBox="0 0 16 16" width="15" height="15" className="ml-[11px] mr-[5px]" fill="none">
            <circle cx="6.5" cy="6.5" r="5" fill="#d8ecfb" stroke="#7db6e2" strokeWidth="1.5" />
            <path d="M10 10l5 5" stroke="#d8b04a" strokeWidth="2" />
          </svg>
          Tìm kiếm
        </div>
        <span className={`absolute right-[18px] top-[5px] flex items-center gap-[1px] font-bold text-[11.5px] text-black ${BOLD}`}>
          Thông báo
          <svg viewBox="0 0 16 16" width="15" height="15">
            <circle cx="8" cy="8" r="7.5" fill="#1e7fd6" />
            <path d="M5 2c3 0 6 3 6 6 0 2-1 4-3 5 4 0 5-4 5-6-1-3-4-5-8-5z" fill="#b6def7" />
          </svg>
        </span>
      </div>
      <div className="flex-1 min-h-0 flex">
        <Sidebar />
        <MainPane />
      </div>
      <StatusBar />
      <Taskbar />
      <Dialog />
    </div>
  )
}
